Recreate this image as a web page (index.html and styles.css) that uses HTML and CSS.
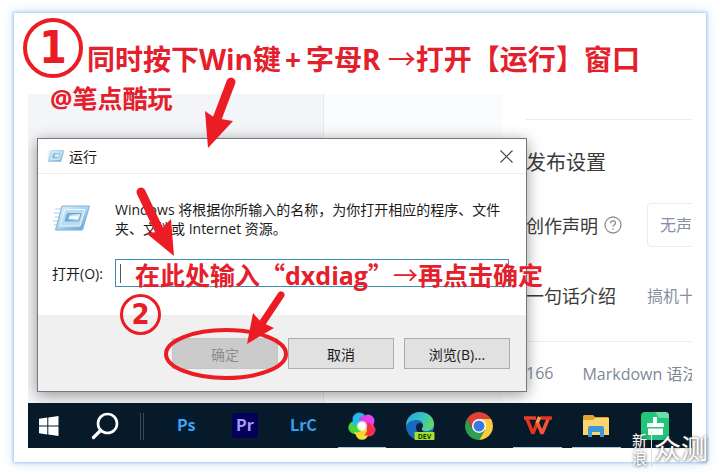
FILE: index.html
```html
<!DOCTYPE html>
<html lang="zh-CN">
<head>
  <meta charset="UTF-8">
  <meta name="viewport" content="width=device-width, initial-scale=1.0">
  <title>运行 dxdiag</title>
  <link rel="stylesheet" href="styles.css">
</head>
<body>
  <svg class="defs" width="0" height="0" aria-hidden="true">
    <defs>
      <linearGradient id="glass" x1="0" y1="0" x2="1" y2="1">
        <stop offset="0" stop-color="#e4f4fb"/>
        <stop offset="0.5" stop-color="#a9d3ee"/>
        <stop offset="1" stop-color="#5d9dd0"/>
      </linearGradient>
      <linearGradient id="pane" x1="0" y1="0" x2="1" y2="0">
        <stop offset="0" stop-color="#5f9fd6"/>
        <stop offset="1" stop-color="#e2f1fa"/>
      </linearGradient>
      <linearGradient id="edgeTop" x1="0" y1="0" x2="1" y2="0.4">
        <stop offset="0" stop-color="#2aa5dc"/>
        <stop offset="0.6" stop-color="#35c1c4"/>
        <stop offset="1" stop-color="#62d76f"/>
      </linearGradient>
      <symbol id="run" viewBox="0 0 38 26">
        <path d="M2 4h9M1 8h8M2 12h6M0 16h7M1 20h5" stroke="#a9cfe8" stroke-width="1.2"/>
        <path d="M9 1h27.500L29.500 25H2.500z" fill="url(#glass)" stroke="#7fb2d8" stroke-width="1"/>
        <path d="M12 4.500h20L27 21H7z" fill="#b9dcf2" stroke="#eef8fd" stroke-width="1"/>
        <path d="M14.500 8.500H28L26 16H12z" fill="url(#pane)" stroke="#6ba5d4" stroke-width="1"/>
        <path d="M17 10.500h8.500l-1 3.500h-9z" fill="#f3fafd"/>
      </symbol>
    </defs>
  </svg>

  <main class="frame">
    <header class="caption">
      <span class="step step-one">1</span>
      <h1>同时按下Win键<span class="plus">+</span>字母R <span class="arrow-char">→</span>打开<span class="cjk">【</span>运行<span class="cjk">】</span>窗口</h1>
    </header>

    <div class="screen">
      <div class="desktop">
        <div class="panel-left"></div>
        <div class="panel-mid"></div>
        <section class="settings">
          <h2>发布设置</h2>
          <div class="setting">
            <label for="declare">创作声明</label>
            <svg class="help" width="18" height="18" viewBox="0 0 18 18" fill="none" stroke="#8a929c" stroke-width="1.300">
              <circle cx="9" cy="9" r="8"/>
              <path d="M6.500 7.200c0-3.200 5-3.200 5-.2 0 1.800-2.400 1.800-2.400 3.700"/>
              <path d="M9 12.200v1.500"/>
            </svg>
            <select id="declare"><option>无声</option></select>
          </div>
          <div class="setting intro">
            <span>一句话介绍</span>
            <span class="value">搞机十</span>
          </div>
          <div class="status">
            <span>166</span>
            <span>Markdown 语法</span>
          </div>
        </section>

        <form class="dialog" role="dialog" aria-label="运行">
          <div class="titlebar">
            <svg width="18" height="12"><use href="#run"/></svg>
            <span>运行</span>
            <button type="button" class="close" aria-label="关闭">
              <svg width="13" height="13" viewBox="0 0 13 13" stroke="#444" stroke-width="1.100"><path d="M.5.5l12 12M12.500.5l-12 12"/></svg>
            </button>
          </div>
          <div class="message">
            <svg width="38" height="26"><use href="#run"/></svg>
            <p>Windows 将根据你所输入的名称，为你打开相应的程序、文件夹、文档或 Internet 资源。</p>
          </div>
          <div class="open-row">
            <label for="open">打开(O):</label>
            <div class="field"><i class="caret"></i><input type="text" id="open"></div>
          </div>
          <div class="actions">
            <button type="button" disabled>确定</button>
            <button type="button">取消</button>
            <button type="button">浏览(B)...</button>
          </div>
        </form>
      </div>

      <nav class="taskbar">
        <div class="start">
          <svg width="20" height="20" viewBox="0 0 20 20" fill="#fff"><path d="M0 2.800 8.300 1.600v7.900H0zM9.300 1.500 19.500 0v9.500H9.300zM0 10.500h8.300v7.900L0 17.200zM9.300 10.500h10.200V20L9.300 18.500z"/></svg>
        </div>
        <div class="search">
          <svg width="28" height="28" viewBox="0 0 28 28" fill="none" stroke="#fff"><circle cx="16.500" cy="11.500" r="9.500" stroke-width="2.600"/><path d="M9.500 18.500 2.500 25.500" stroke-width="3.200" stroke-linecap="round"/></svg>
        </div>
        <div class="sep"></div>
        <div class="app"><span class="tile ps">Ps</span></div>
        <div class="app"><span class="tile pr">Pr</span></div>
        <div class="app"><span class="tile lrc">LrC</span></div>
        <div class="app running">
          <svg width="28" height="28" viewBox="0 0 28 28">
            <circle cx="11" cy="7" r="6.500" fill="#27a9f0"/>
            <circle cx="20" cy="9" r="6.500" fill="#d94bf0"/>
            <circle cx="21" cy="18" r="6.500" fill="#f2304d"/>
            <circle cx="14" cy="21.500" r="6.300" fill="#f4e534"/>
            <circle cx="6.800" cy="15.500" r="6.500" fill="#43cf35"/>
            <path d="M5 8c1-6 8-8 12-5-5 .5-7 4-6 9-3 1-5 3-5 6-2-3-2-7-1-10z" fill="#2bb8e6"/>
            <path d="M11 7c4-4 10-3 12 0 3 3 3 7 1 9 0-4-3-7-8-6z" fill="#e83fe6"/>
            <path d="M19 10c5 2 7 7 4 11-2 3-5 3-7 2 3-2 4-6 2-9z" fill="#f5303d"/>
            <path d="M19 17c0 5-5 9-9 7-3-1-4-3-4-5 3 1 7 0 9-3z" fill="#f6d52e"/>
            <path d="M13 19c-4 3-9 1-11-3-1-3 0-5 2-6 0 3 3 6 7 6z" fill="#4ed82f"/>
            <circle cx="14" cy="14" r="5.300" fill="#fff" opacity="0.6"/>
            <circle cx="14" cy="14" r="3.800" fill="#fff"/>
          </svg>
        </div>
        <div class="app">
          <svg width="29" height="28" viewBox="0 0 29 28">
            <circle cx="14" cy="14" r="14" fill="#1769bd"/>
            <path d="M0 14C0 5 7 0 14 0c8 0 14 5 14 12 0 5-4 7-8 7-3 0-5-1-4-3 2-4 0-8-5-8-5 0-9 2-11 6z" fill="url(#edgeTop)"/>
            <path d="M10 15c0-3 2-4 4-4 3 0 4 3 2 5-1 3 2 5 6 4-4 5-12 2-12-5z" fill="#0a2238"/>
            <rect x="8.500" y="20" width="20" height="8" rx="1" fill="#a6e22c"/>
            <text x="18.500" y="26.800" class="dev">DEV</text>
          </svg>
        </div>
        <div class="app">
          <svg width="28" height="28" viewBox="0 0 28 28">
            <path d="M1.880 7A14 14 0 0 1 26.120 7H14L8 17.500z" fill="#dd4236"/>
            <path d="M26.120 7A14 14 0 0 1 14 28L20.060 17.500 14 7z" fill="#fbcb3e"/>
            <path d="M14 28A14 14 0 0 1 1.880 7L7.940 17.500A7 7 0 0 0 20.060 17.500z" fill="#2f9e4f"/>
            <circle cx="14" cy="14" r="7" fill="#fff"/>
            <circle cx="14" cy="14" r="5.500" fill="#3b78e0"/>
          </svg>
        </div>
        <div class="app running">
          <svg width="28" height="20" viewBox="0 0 28 20" fill="none" stroke-width="3.400" stroke-linejoin="bevel">
            <path d="M0 2h12" stroke="#f0402c"/>
            <path d="M2.500 2l6.500 15.500L15.500 1" stroke="#e8341f"/>
            <path d="M13 6l5 11.500L24.500 2" stroke="#f4533a"/>
            <path d="M16 2h12" stroke="#e8341f"/>
            <path d="M15.500 1l-2.500 6" stroke="#f59a42"/>
          </svg>
        </div>
        <div class="app running">
          <svg width="26" height="22" viewBox="0 0 26 22">
            <path d="M0 1.500Q0 0 1.500 0H10l2 2h12.500Q26 2 26 3.500V20H0z" fill="#e0a52f"/>
            <path d="M0 5h10l2-2h14v17H0z" fill="#fbd56f"/>
            <path d="M5 22v-9q0-2 2-2h12q2 0 2 2v9h-4v-5H9v5z" fill="#3f97d3"/>
          </svg>
        </div>
        <div class="app">
          <svg width="28" height="28" viewBox="0 0 28 28">
            <rect width="28" height="28" rx="4" fill="#22c57c"/>
            <path d="M12 5h4v6h6q1 0 1 1v3H6v-3q0-1 1-1h5zM7 16.500h15V23H7z" fill="#fff"/>
            <path d="M14 0h10q4 0 4 4v2H18z" fill="#6fdcae"/>
          </svg>
        </div>
      </nav>
    </div>

    <!-- red notes drawn over the desktop -->
    <p class="note author">@笔点酷玩</p>
    <p class="note type-here">在此处输入<span class="cjk">“</span>dxdiag<span class="cjk">”</span><span class="arrow-char">→</span>再点击确定</p>
    <span class="step step-two">2</span>
    <svg class="marks" width="692" height="449" viewBox="14 13 692 449" fill="#ec1c24" stroke="none">
      <path d="M231 82 217 119" stroke="#ec1c24" stroke-width="9" stroke-linecap="round"/>
      <path d="M208 148 205 111 215 118 233 121z"/>
      <path d="M141 192 160 232" stroke="#ec1c24" stroke-width="9" stroke-linecap="round"/>
      <path d="M174 256 146 233 158 232 171 219z"/>
      <path d="M281 295 261 325" stroke="#ec1c24" stroke-width="7" stroke-linecap="round"/>
      <path d="M247 344 253 313 261 322 274 328z"/>
      <ellipse cx="226" cy="354" rx="60" ry="24" fill="none" stroke="#ec1c24" stroke-width="4"/>
    </svg>

    <div class="watermark">
      <span class="sina">新浪</span>
      <span class="brand">众测</span>
    </div>
  </main>
</body>
</html>
```

FILE: styles.css
```css
* {
  box-sizing: border-box;
}

body {
  margin: 0;
  padding: 13px 14px;
  background-color: #fff;
  font-family: "Open Sans", "Noto Sans CJK SC", sans-serif;
  font-size: 14px;
  color: #1a1a1a;
}

h1, h2, p {
  margin: 0;
}

svg {
  display: block;
  flex: none;
}

.defs {
  position: absolute;
}

.frame {
  position: relative;
  padding: 0 14px 14px;
  background-color: #fff;
  box-shadow: 0 0 3px 1px #9cc8f5, 0 0 12px 2px #dcebfb;
}

/* captions */
.caption {
  display: flex;
  align-items: flex-start;
  gap: 4px;
  height: 81px;
  margin-left: -5px;
  padding-top: 5px;
  color: #e3202b;
}

.caption h1 {
  padding-top: 20px;
  font-size: 28px;
  line-height: 40px;
  font-weight: 700;
  white-space: nowrap;
}

.cjk {
  font-family: "Noto Sans CJK SC", sans-serif;
}

.plus {
  padding: 0 5px 0 4px;
}

.arrow-char {
  font-family: "Noto Sans CJK SC", sans-serif;
  font-weight: 400;
}

.step {
  display: flex;
  flex: none;
  align-items: center;
  justify-content: center;
  border: 4px solid #ec1c24;
  border-radius: 50%;
  font-family: "DejaVu Sans Condensed", "DejaVu Sans", sans-serif;
  font-weight: 700;
  line-height: 1;
  color: #ec1c24;
}

.step-one {
  width: 60px;
  height: 60px;
  font-size: 44px;
}

.step-two {
  position: absolute;
  left: 106px;
  top: 281px;
  width: 41px;
  height: 41px;
  border-width: 3px;
  font-size: 29px;
}

.note {
  position: absolute;
  font-weight: 700;
  color: #e3202b;
  white-space: nowrap;
}

.author {
  left: 36px;
  top: 67px;
  font-size: 25px;
  line-height: 36px;
}

.type-here {
  left: 121px;
  top: 243px;
  font-size: 25px;
  line-height: 36px;
}

.marks {
  position: absolute;
  left: 0;
  top: 0;
}

/* page behind the dialog */
.desktop {
  position: relative;
  display: grid;
  grid-template-columns: 296px 178px 1fr;
  overflow: hidden;
}

.panel-left {
  background-color: #f3f5f8;
  border-right: 1px solid #e6e8eb;
}

.panel-mid {
  background-color: #fafbfc;
}

.settings {
  min-width: 0;
  margin-top: 25px;
  padding-left: 24px;
  overflow: hidden;
  white-space: nowrap;
  color: #3a3a3a;
}

.settings h2 {
  padding: 28px 0 25px;
  border-top: 1px solid #ececec;
  font-size: 20px;
  line-height: 30px;
  font-weight: 400;
}

.setting {
  display: flex;
  align-items: center;
  height: 44px;
  font-size: 18px;
}

.help {
  margin: 0 25px 0 6px;
}

.setting select {
  appearance: none;
  width: 80px;
  flex: none;
  height: 44px;
  padding: 0 12px;
  border: 1px solid #ebebeb;
  border-radius: 4px;
  background-color: #fff;
  font: inherit;
  font-size: 16px;
  color: #8590a0;
}

.intro {
  margin: 26px 0 24px;
  gap: 31px;
}

.value {
  font-size: 16px;
  color: #8590a0;
}

.status {
  display: flex;
  align-items: center;
  gap: 29px;
  height: 62px;
  border-top: 1px solid #ececec;
  font-size: 16px;
  color: #808896;
}

/* run dialog */
.dialog {
  position: absolute;
  left: 9px;
  top: 44px;
  width: 490px;
  border: 1px solid #777;
  background-color: #fff;
  box-shadow: 0 3px 14px rgba(0, 0, 0, 0.4);
}

.titlebar {
  display: flex;
  align-items: center;
  gap: 4px;
  height: 35px;
  padding: 0 13px 0 9px;
  border-bottom: 1px solid #ededed;
}

.close {
  margin-left: auto;
  padding: 0;
  border: 0;
  background: none;
}

.message {
  display: flex;
  align-items: flex-start;
  gap: 24px;
  padding: 26px 12px 0 15px;
}

.message svg {
  margin-top: 5px;
}

.message p {
  line-height: 19px;
}

.open-row {
  display: flex;
  align-items: center;
  gap: 10px;
  padding: 21px 17px 28px 14px;
}

.open-row label {
  width: 53px;
  white-space: nowrap;
}

.field {
  display: flex;
  flex: 1;
  align-items: center;
  height: 28px;
  padding: 0 4px;
  border: 1px solid #3a8fb0;
  background-color: #fff;
}

.caret {
  width: 1px;
  height: 19px;
  background-color: #555;
}

.field input {
  flex: 1;
  min-width: 0;
  padding: 0;
  border: 0;
  outline: 0;
  background: none;
  font: inherit;
}

.actions {
  display: flex;
  justify-content: flex-end;
  gap: 10px;
  padding: 23px 16px 22px;
  background-color: #f0f0f0;
}

.actions button {
  width: 106px;
  height: 31px;
  padding: 0;
  border: 1px solid #adadad;
  background-color: #e1e1e1;
  font: inherit;
  color: #1a1a1a;
}

.actions button:disabled {
  border-color: #c6c6c6;
  background-color: #cbcbcb;
  color: #8c8c8c;
}

/* taskbar */
.taskbar {
  display: flex;
  align-items: stretch;
  height: 45px;
  padding-right: 8px;
  background-color: #071a29;
}

.start, .search, .app {
  display: flex;
  align-items: center;
  justify-content: center;
}

.start {
  width: 41px;
}

.search {
  width: 71px;
}

.sep {
  width: 4px;
  margin: 10px 13px 8px 0;
  border: 1px solid #3a4a57;
  border-width: 0 1px;
}

.app {
  position: relative;
  flex: 1;
}

.running::after {
  content: "";
  position: absolute;
  left: 5px;
  right: 5px;
  bottom: 0;
  height: 1px;
  background-color: #a9c8e6;
}

.tile {
  width: 26px;
  height: 25px;
  border-radius: 4px;
  font: 700 16px/23px "Noto Sans CJK SC", sans-serif;
  text-align: center;
}

.ps {
  background-color: #041c2f;
  color: #3ea4f5;
}

.pr {
  background-color: #04005a;
  color: #a99bfa;
}

.lrc {
  display: flex;
  justify-content: center;
  background-color: #041c2f;
  color: #3f9fe6;
}

.dev {
  font: 700 7px "Open Sans", sans-serif;
  text-anchor: middle;
  fill: #17330b;
}

.watermark {
  position: absolute;
  right: -2px;
  bottom: -5px;
  display: flex;
  align-items: center;
  color: #fff;
  text-shadow: 0 0 3px rgba(60, 60, 60, 0.7), 1px 1px 3px rgba(60, 60, 60, 0.4);
}

.sina {
  width: 20px;
  border-right: 1px solid #ddd;
  font-size: 15px;
  line-height: 18px;
}

.brand {
  padding-left: 2px;
  font-size: 27px;
  line-height: 36px;
}
```
